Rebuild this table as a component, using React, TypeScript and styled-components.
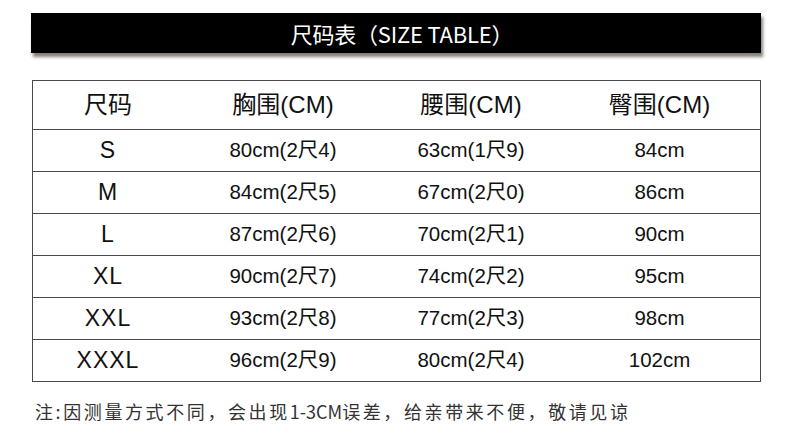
import React from "react";
import styled, { createGlobalStyle } from "styled-components";

const Global = createGlobalStyle`
  html, body { margin: 0; padding: 0; background: #fff; }
  body { font-family: "Liberation Sans", "Noto Sans CJK SC", sans-serif; }
`;

const Page = styled.div`
  width: 790px;
  height: 443px;
  padding-top: 13px;
  box-sizing: border-box;
  background: #fff;
  overflow: hidden;
`;

const Banner = styled.div`
  margin-left: 31px;
  width: 730px;
  height: 40px;
  padding-left: 12px;
  box-sizing: border-box;
  background: #000;
  box-shadow: 2px 4px 3px rgba(95, 85, 75, 0.75);
  display: flex;
  align-items: center;
  justify-content: center;
  color: #fff;
  font-family: "Noto Sans CJK SC", sans-serif;
  font-size: 22px;
  letter-spacing: -0.2px;
  line-height: 1;
`;

const Table = styled.div`
  margin: 27px 0 0 32px;
  width: 729px;
  border: 1px solid #4a4a4a;
  box-sizing: border-box;
  color: #111;
`;

const Row = styled.div<{ $head?: boolean }>`
  display: grid;
  grid-template-columns: 150px 200px 176px 1fr;
  height: ${(p) => (p.$head ? 48 : 41)}px;
  align-items: center;
  & + & {
    border-top: 1px solid #4a4a4a;
  }
`;

const Cell = styled.div<{ $size: number; $spread?: boolean }>`
  text-align: center;
  font-size: ${(p) => p.$size}px;
  letter-spacing: ${(p) => (p.$spread ? "1px" : "0")};
  line-height: 1;
  white-space: nowrap;
`;

const Note = styled.div`
  margin: 19px 0 0 35px;
  font-family: "Noto Sans CJK SC", sans-serif;
  font-size: 18px;
  letter-spacing: 2.6px;
  line-height: 20px;
  color: #333;
  white-space: nowrap;
`;

const Tight = styled.span`
  letter-spacing: 0;
`;

const headers = ["尺码", "胸围(CM)", "腰围(CM)", "臀围(CM)"];
const rows = [
  ["S", "80cm(2尺4)", "63cm(1尺9)", "84cm"],
  ["M", "84cm(2尺5)", "67cm(2尺0)", "86cm"],
  ["L", "87cm(2尺6)", "70cm(2尺1)", "90cm"],
  ["XL", "90cm(2尺7)", "74cm(2尺2)", "95cm"],
  ["XXL", "93cm(2尺8)", "77cm(2尺3)", "98cm"],
  ["XXXL", "96cm(2尺9)", "80cm(2尺4)", "102cm"],
];

export default function App() {
  return (
    <Page>
      <Global />
      <Banner>尺码表（SIZE TABLE）</Banner>
      <Table>
        <Row $head>
          {headers.map((h) => (
            <Cell key={h} $size={24}>
              {h}
            </Cell>
          ))}
        </Row>
        {rows.map((r) => (
          <Row key={r[0]}>
            {r.map((c, i) => (
              <Cell key={i} $size={i === 0 ? 23 : 20.5} $spread={i === 0}>
                {c}
              </Cell>
            ))}
          </Row>
        ))}
      </Table>
      <Note>
        注:因测量方式不同，会出现<Tight>1-3CM</Tight>误差，给亲带来不便，敬请见谅
      </Note>
    </Page>
  );
}
